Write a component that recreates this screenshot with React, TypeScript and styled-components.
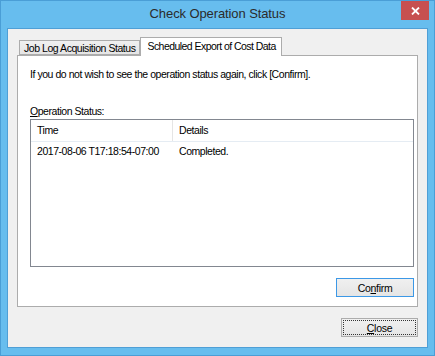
import React from 'react';
import styled, { createGlobalStyle } from 'styled-components';

const GlobalStyle = createGlobalStyle`
  html, body {
    margin: 0;
    padding: 0;
    background: #ffffff;
  }
  body {
    font-family: 'Liberation Sans', Arial, sans-serif;
  }
`;

const Frame = styled.div`
  box-sizing: border-box;
  width: 435px;
  height: 356px;
  background: #67bdee;
  border: 1px solid #4a9ed6;
  display: flex;
  flex-direction: column;
`;

const TitleBar = styled.div`
  height: 27px;
  display: grid;
  grid-template-columns: 1fr auto 1fr;
  align-items: start;
`;

const Title = styled.div`
  grid-column: 2;
  padding-top: 5px;
  font-size: 13px;
  letter-spacing: -0.1px;
  color: #2b2b2b;
  white-space: nowrap;
`;

const CloseX = styled.div`
  grid-column: 3;
  justify-self: end;
  margin-right: 5px;
  width: 28px;
  height: 19px;
  background: #c75050;
  display: flex;
  align-items: center;
  justify-content: center;
`;

const Client = styled.div`
  box-sizing: border-box;
  flex: 1;
  margin: 0 6px 7px 6px;
  background: #f0f0f0;
  border: 1px solid #4f9fd6;
  padding: 8px 10px 0 9px;
  display: flex;
  flex-direction: column;
`;

const TabStrip = styled.div`
  display: flex;
  align-items: flex-end;
  height: 18px;
  padding-left: 2px;
  position: relative;
  z-index: 1;
`;

const Tab = styled.div<{ active?: boolean }>`
  box-sizing: border-box;
  height: ${(p) => (p.active ? '19px' : '15px')};
  margin-bottom: ${(p) => (p.active ? '-1px' : '0')};
  padding: ${(p) => (p.active ? '2px 5px 0 6px' : '1px 4px 0 4px')};
  border: 1px solid #acacac;
  border-bottom: ${(p) => (p.active ? 'none' : '1px solid #acacac')};
  background: ${(p) => (p.active ? '#ffffff' : 'linear-gradient(#f0f0f0, #e5e5e5)')};
  font-size: 10.5px;
  letter-spacing: ${(p) => (p.active ? '-0.55px' : '-0.45px')};
  color: #000;
  white-space: nowrap;
`;

const Panel = styled.div`
  box-sizing: border-box;
  width: 401px;
  height: 252px;
  background: #ffffff;
  border: 1px solid #acacac;
  padding: 12px 3px 9px 12px;
  display: flex;
  flex-direction: column;
`;

const Label = styled.div<{ gap?: number }>`
  font-size: 10.5px;
  letter-spacing: -0.45px;
  color: #000;
  margin-bottom: ${(p) => p.gap ?? 0}px;
  white-space: nowrap;
`;

const ListBox = styled.div`
  box-sizing: border-box;
  width: 384px;
  height: 148px;
  border: 1px solid #828790;
  background: #fff;
  margin-top: 2px;
`;

const HeaderRow = styled.div`
  display: grid;
  grid-template-columns: 142px 1fr;
  height: 21px;
  border-bottom: 1px solid #e5ecf3;
`;

const HeaderCell = styled.div<{ last?: boolean }>`
  font-size: 10.5px;
  letter-spacing: -0.45px;
  color: #000;
  padding: 4px 0 0 6px;
  border-right: ${(p) => (p.last ? 'none' : '1px solid #e5e5e5')};
`;

const DataRow = styled.div`
  display: grid;
  grid-template-columns: 142px 1fr;
  height: 18px;
`;

const Cell = styled.div`
  font-size: 10.5px;
  letter-spacing: -0.45px;
  color: #000;
  padding: 3px 0 0 6px;
  white-space: nowrap;
`;

const ButtonRow = styled.div<{ top?: number; right?: number }>`
  display: flex;
  justify-content: flex-end;
  margin-top: ${(p) => (p.top !== undefined ? `${p.top}px` : 'auto')};
  margin-right: ${(p) => p.right ?? 0}px;
`;

const Button = styled.div<{ focused?: boolean; def?: boolean; w: number }>`
  box-sizing: border-box;
  width: ${(p) => p.w}px;
  height: 19px;
  border: 1px solid ${(p) => (p.def ? '#3c98e6' : '#acacac')};
  background: linear-gradient(#f0f0f0, #e5e5e5);
  font-size: 10.5px;
  letter-spacing: -0.3px;
  color: #000;
  display: flex;
  align-items: center;
  justify-content: center;
  ${(p) => (p.focused ? `outline: 1px dotted #333; outline-offset: -3px;` : '')}
`;

const Key = styled.span`
  text-decoration: underline;
`;

export default function App() {
  return (
    <>
      <GlobalStyle />
      <Frame>
        <TitleBar>
          <Title>Check Operation Status</Title>
          <CloseX>
            <svg width="9" height="8" viewBox="0 0 9 8">
              <path d="M1 0.5 L8 7.5 M8 0.5 L1 7.5" stroke="#fff" strokeWidth="1.8" />
            </svg>
          </CloseX>
        </TitleBar>
        <Client>
          <TabStrip>
            <Tab>Job Log Acquisition Status</Tab>
            <Tab active>Scheduled Export of Cost Data</Tab>
          </TabStrip>
          <Panel>
            <Label gap={25}>
              If you do not wish to see the operation status again, click [Confirm].
            </Label>
            <Label>
              <Key>O</Key>peration Status:
            </Label>
            <ListBox>
              <HeaderRow>
                <HeaderCell>Time</HeaderCell>
                <HeaderCell last>Details</HeaderCell>
              </HeaderRow>
              <DataRow>
                <Cell>2017-08-06 T17:18:54-07:00</Cell>
                <Cell>Completed.</Cell>
              </DataRow>
            </ListBox>
            <ButtonRow>
              <Button def w={78}>
                Co<Key>n</Key>firm
              </Button>
            </ButtonRow>
          </Panel>
          <ButtonRow top={11} right={-1}>
            <Button focused w={77}>
              <Key>C</Key>lose
            </Button>
          </ButtonRow>
        </Client>
      </Frame>
    </>
  );
}
